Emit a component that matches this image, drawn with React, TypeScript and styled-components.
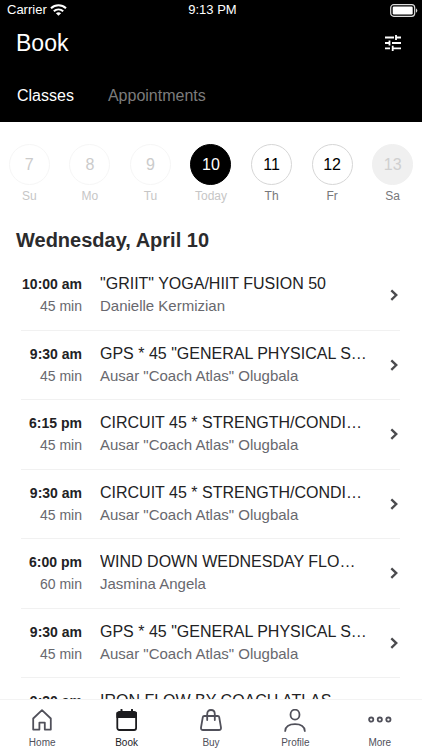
import React, { useState } from "react";
import styled, { createGlobalStyle } from "styled-components";

const GlobalStyle = createGlobalStyle`
  *, *::before, *::after { box-sizing: border-box; }
  html, body { margin: 0; background: #fff; }
  body, button { font-family: "Liberation Sans", Arial, Helvetica, sans-serif; }
  button { margin: 0; padding: 0; border: 0; background: none; color: inherit; cursor: pointer; }
  h1, h2, h3, p { margin: 0; }
  svg { display: block; }
`;

const Screen = styled.div`
  display: flex;
  flex-direction: column;
  height: 100vh;
  overflow: hidden;
  background: #fff;
  color: #222224;
`;

const Header = styled.header`
  flex: none;
  background: #000;
  color: #fff;
`;

const StatusBar = styled.div`
  display: grid;
  grid-template-columns: 1fr auto 1fr;
  align-items: center;
  height: 20px;
  padding: 0 4px 0 7px;
  font-size: 13px;
  line-height: 20px;
`;

const Carrier = styled.div`
  display: flex;
  align-items: center;
  gap: 3px;
`;

const Battery = styled.div`
  justify-self: end;
`;

const TitleBar = styled.div`
  display: flex;
  align-items: center;
  justify-content: space-between;
  height: 46px;
  padding: 0 20px 0 16px;
`;

const Title = styled.h1`
  font-size: 23px;
  font-weight: 400;
  line-height: 28px;
`;

const Tabs = styled.div`
  display: flex;
  align-items: center;
  gap: 34px;
  height: 56px;
  padding: 4px 17px 0;
`;

const Tab = styled.button<{ $active: boolean }>`
  font-size: 16px;
  line-height: 24px;
  color: ${(p) => (p.$active ? "#fff" : "#7c7c7c")};
`;

const Week = styled.div`
  flex: none;
  display: grid;
  grid-template-columns: repeat(7, 1fr);
  margin: 0 -1px;
  padding-top: 22px;
`;

type DayKind = "past" | "today" | "open" | "closed";

const dayColors: Record<DayKind, { fill: string; border: string; number: string; label: string }> = {
  past: { fill: "#fff", border: "#f6f6f6", number: "#cbcbcb", label: "#c6c6c6" },
  today: { fill: "#000", border: "#000", number: "#fff", label: "#c6c6c6" },
  open: { fill: "#fff", border: "#d6d6d6", number: "#000", label: "#77777a" },
  closed: { fill: "#f0f0f0", border: "#f0f0f0", number: "#cfcfcf", label: "#77777a" },
};

const Day = styled.button<{ $kind: DayKind }>`
  display: flex;
  flex-direction: column;
  align-items: center;
  gap: 3px;
  font-size: 12px;
  line-height: 16px;
  color: ${(p) => dayColors[p.$kind].label};
`;

const DayNumber = styled.span<{ $kind: DayKind }>`
  display: flex;
  align-items: center;
  justify-content: center;
  width: 41px;
  height: 41px;
  border-radius: 50%;
  border: 1px solid ${(p) => dayColors[p.$kind].border};
  background: ${(p) => dayColors[p.$kind].fill};
  color: ${(p) => dayColors[p.$kind].number};
  font-size: 16px;
`;

const Heading = styled.h2`
  flex: none;
  padding: 24px 16px 9px;
  font-size: 20px;
  line-height: 24px;
  color: #2b2b2d;
`;

const ClassList = styled.main`
  flex: 1;
  min-height: 0;
  overflow: hidden;
  padding: 0 22px 0 21px;
`;

const ClassRow = styled.button`
  display: grid;
  grid-template-columns: 61px minmax(0, 1fr) 12px;
  column-gap: 18px;
  align-items: center;
  width: 100%;
  height: 70px;
  padding-bottom: 2px;
  border-bottom: 1px solid #f1f1f1;
  text-align: left;
  color: #222224;

  &:nth-child(even) {
    height: 69px;
    padding-bottom: 0;
  }
`;

const TimeColumn = styled.div`
  display: flex;
  flex-direction: column;
  align-items: flex-end;
  gap: 2px;
  white-space: nowrap;
`;

const Time = styled.strong`
  font-size: 14px;
  line-height: 20px;
`;

const Duration = styled.span`
  font-size: 14px;
  line-height: 20px;
  color: #68686e;
`;

const Coach = styled(Duration)`
  font-size: 15px;
`;

const Info = styled.div`
  display: flex;
  flex-direction: column;
  gap: 2px;
`;

const ClassName = styled.h3`
  overflow: hidden;
  text-overflow: ellipsis;
  white-space: nowrap;
  font-size: 16px;
  font-weight: 400;
  line-height: 20px;
`;

const BottomNav = styled.nav`
  flex: none;
  display: grid;
  grid-template-columns: repeat(5, 1fr);
  height: 51px;
  border-top: 1px solid #f3f3f3;
  background: #fff;
`;

const NavItem = styled.button<{ $active: boolean }>`
  display: flex;
  flex-direction: column;
  align-items: center;
  gap: 3px;
  padding-top: 9px;
  font-size: 10px;
  line-height: 14px;
  color: ${(p) => (p.$active ? "#1c1c1f" : "#50505a")};
`;

const WifiIcon = () => (
  <svg width="17" height="12" viewBox="0 0 17 12" fill="none" stroke="#fff" strokeWidth="2" aria-hidden="true">
    <path d="M1 4.2C5.2.2 11.8.2 16 4.2" />
    <path d="M3.8 7.2C6.5 4.8 10.5 4.8 13.2 7.2" />
    <path d="M8.5 11.8 5.9 9.2Q8.5 7.2 11.1 9.2Z" fill="#fff" stroke="none" />
  </svg>
);

const BatteryIcon = () => (
  <svg width="28" height="13" viewBox="0 0 28 13" aria-hidden="true">
    <rect x=".7" y=".7" width="24" height="11.6" rx="3" fill="none" stroke="#ddd" strokeWidth="1.2" />
    <rect x="2.7" y="2.6" width="20" height="7.8" rx="1.2" fill="#fff" />
    <path d="M26 4.2Q28.6 6.5 26 8.8Z" fill="#ddd" />
  </svg>
);

const FilterIcon = () => (
  <svg width="18" height="18" viewBox="0 0 18 18" stroke="#fff" strokeWidth="1.8" aria-hidden="true">
    <path d="M1 3.5H10M12 3.5H17M12 1V6M1 9H5M5.5 6.5V11.5M8 9H17M1 14.3H6M8.7 11.8V17M8.7 14.3H17" />
  </svg>
);

const Chevron = () => (
  <svg width="12" height="14" viewBox="0 0 12 14" fill="none" stroke="#4b4b4e" strokeWidth="2.3" aria-hidden="true">
    <path d="M3.3 2.3 8.3 7.1 3.3 11.9" />
  </svg>
);

const navIcons: Record<string, React.ReactNode> = {
  Home: <path d="M3.2 9.5 12 1.2 20.8 9.5V20.6H14.8V13.6H9.4V20.6H3.2Z" />,
  Book: (
    <>
      <rect x="2.3" y="3" width="18.8" height="18" rx="2" />
      <path d="M2.3 3.8H21.1V8.2H2.3Z" fill="currentColor" />
      <path d="M6.5 .8V4M17 .8V4" strokeWidth="2" />
    </>
  ),
  Buy: (
    <>
      <path d="M5.3 7H18.7Q20 7 20.2 8.2L22 18.6Q22.2 21 20 21H4Q1.8 21 2 18.6L3.8 8.2Q4 7 5.3 7Z" />
      <path d="M8.2 11V5.2Q8.2 1 12 1T15.8 5.2V11" />
    </>
  ),
  Profile: (
    <>
      <ellipse cx="12" cy="5.7" rx="4.5" ry="5" />
      <path d="M2.2 22Q2.8 15.2 12 15.2T21.8 22" />
    </>
  ),
  More: (
    <>
      <circle cx="3.2" cy="10.6" r="2.1" />
      <circle cx="11.8" cy="10.6" r="2.1" />
      <circle cx="20.4" cy="10.6" r="2.1" />
    </>
  ),
};

const days: { number: number; label: string; kind: DayKind }[] = [
  { number: 7, label: "Su", kind: "past" },
  { number: 8, label: "Mo", kind: "past" },
  { number: 9, label: "Tu", kind: "past" },
  { number: 10, label: "Today", kind: "today" },
  { number: 11, label: "Th", kind: "open" },
  { number: 12, label: "Fr", kind: "open" },
  { number: 13, label: "Sa", kind: "closed" },
];

const atlas = 'Ausar "Coach Atlas" Olugbala';

const classes = [
  { time: "10:00 am", length: "45 min", name: '"GRIIT" YOGA/HIIT FUSION 50', coach: "Danielle Kermizian" },
  { time: "9:30 am", length: "45 min", name: 'GPS * 45 "GENERAL PHYSICAL S…', coach: atlas },
  { time: "6:15 pm", length: "45 min", name: "CIRCUIT 45 * STRENGTH/CONDI…", coach: atlas },
  { time: "9:30 am", length: "45 min", name: "CIRCUIT 45 * STRENGTH/CONDI…", coach: atlas },
  { time: "6:00 pm", length: "60 min", name: "WIND DOWN WEDNESDAY FLO…", coach: "Jasmina Angela" },
  { time: "9:30 am", length: "45 min", name: 'GPS * 45 "GENERAL PHYSICAL S…', coach: atlas },
  { time: "9:30 am", length: "45 min", name: "IRON FLOW BY COACH ATLAS", coach: atlas },
];

export default function App() {
  const [tab, setTab] = useState("Classes");
  const [page, setPage] = useState("Book");

  return (
    <Screen>
      <GlobalStyle />
      <Header>
        <StatusBar>
          <Carrier>
            Carrier <WifiIcon />
          </Carrier>
          <span>9:13 PM</span>
          <Battery>
            <BatteryIcon />
          </Battery>
        </StatusBar>
        <TitleBar>
          <Title>Book</Title>
          <button type="button" aria-label="Filter">
            <FilterIcon />
          </button>
        </TitleBar>
        <Tabs role="tablist">
          {["Classes", "Appointments"].map((name) => (
            <Tab
              key={name}
              type="button"
              role="tab"
              aria-selected={tab === name}
              $active={tab === name}
              onClick={() => setTab(name)}
            >
              {name}
            </Tab>
          ))}
        </Tabs>
      </Header>
      <Week>
        {days.map((day) => (
          <Day key={day.number} type="button" $kind={day.kind}>
            <DayNumber $kind={day.kind}>{day.number}</DayNumber>
            {day.label}
          </Day>
        ))}
      </Week>
      <Heading>Wednesday, April 10</Heading>
      <ClassList>
        {classes.map((item, index) => (
          <ClassRow key={index} type="button">
            <TimeColumn>
              <Time>{item.time}</Time>
              <Duration>{item.length}</Duration>
            </TimeColumn>
            <Info>
              <ClassName>{item.name}</ClassName>
              <Coach>{item.coach}</Coach>
            </Info>
            <Chevron />
          </ClassRow>
        ))}
      </ClassList>
      <BottomNav>
        {Object.entries(navIcons).map(([name, icon]) => (
          <NavItem key={name} type="button" $active={page === name} onClick={() => setPage(name)}>
            <svg
              width="24"
              height="24"
              viewBox="0 0 24 24"
              fill="none"
              stroke="currentColor"
              strokeWidth="1.8"
              strokeLinejoin="round"
              strokeLinecap="round"
              aria-hidden="true"
            >
              {icon}
            </svg>
            {name}
          </NavItem>
        ))}
      </BottomNav>
    </Screen>
  );
}
